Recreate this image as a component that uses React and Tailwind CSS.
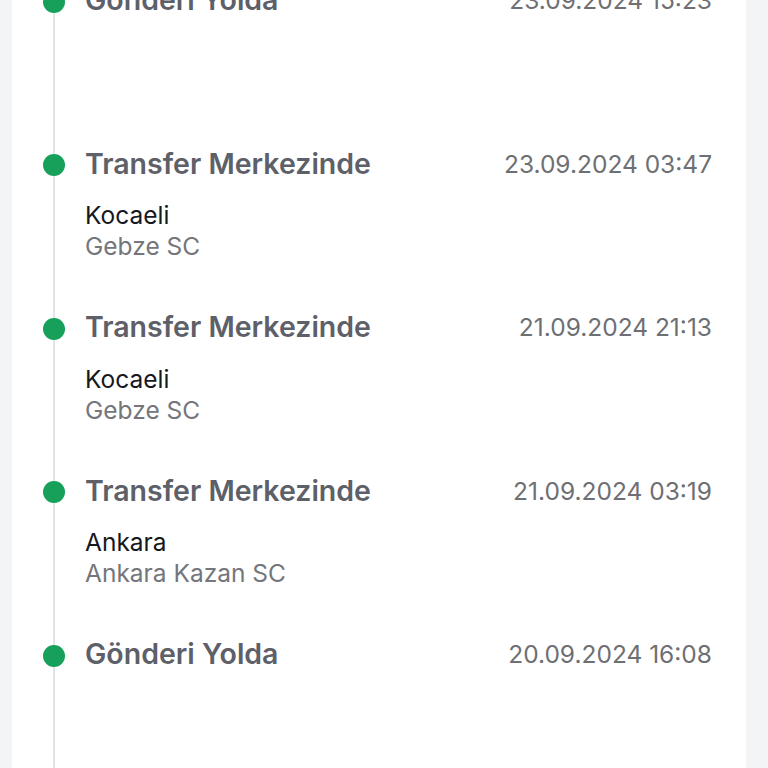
const EVENTS = [
  { title: 'Gönderi Yolda', date: '23.09.2024 15:23', city: null, branch: null },
  { title: 'Transfer Merkezinde', date: '23.09.2024 03:47', city: 'Kocaeli', branch: 'Gebze SC' },
  { title: 'Transfer Merkezinde', date: '21.09.2024 21:13', city: 'Kocaeli', branch: 'Gebze SC' },
  { title: 'Transfer Merkezinde', date: '21.09.2024 03:19', city: 'Ankara', branch: 'Ankara Kazan SC' },
  { title: 'Gönderi Yolda', date: '20.09.2024 16:08', city: null, branch: null },
]

function TimelineItem({ event }) {
  return (
    <div className="flex h-[163.5px]">
      {/* çizgi + nokta */}
      <div className="flex w-[24px] shrink-0 flex-col items-center">
        <div className="h-[5px] w-[2px] bg-[#e3e4e7]" />
        <div className="size-[22px] shrink-0 rounded-full bg-[#17a05a]" />
        <div className="w-[2px] flex-1 bg-[#e3e4e7]" />
      </div>

      <div className="ml-[19px] flex-1">
        <div className="flex h-[30px] items-center justify-between">
          <span className="text-[28.5px] font-semibold text-[#5d6068]">{event.title}</span>
          <span className="text-[24.5px] text-[#6e6f73]">{event.date}</span>
        </div>
        {event.city && (
          <div className="mt-[21px] text-[24.5px] leading-[31px]">
            <div className="text-[#16181d]">{event.city}</div>
            <div className="text-[#74767b]">{event.branch}</div>
          </div>
        )}
      </div>
    </div>
  )
}

export default function App() {
  return (
    <div
      className="h-[768px] overflow-hidden bg-[#f3f4f6] pl-3 pr-[22px]"
      style={{ fontFamily: 'Inter, "Noto Sans", sans-serif' }}
    >
      <div className="flow-root h-full overflow-hidden bg-white pl-[30px] pr-[34px]">
        <div className="-mt-[14.5px]">
          {EVENTS.map((e, i) => (
            <TimelineItem key={i} event={e} />
          ))}
        </div>
      </div>
    </div>
  )
}
